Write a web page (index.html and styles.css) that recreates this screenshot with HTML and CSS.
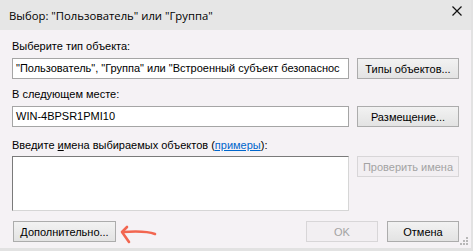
FILE: index.html
```html
<!DOCTYPE html>
<html lang="ru">
<head>
  <meta charset="UTF-8" />
  <title>Выбор: "Пользователь" или "Группа"</title>
  <link rel="stylesheet" href="styles.css">
</head>
<body>
  <div class="window">
    <!-- Заголовок -->
    <div class="titlebar">
      <span class="title">Выбор: "Пользователь" или "Группа"</span>
      <span class="close">
        <svg width="10" height="10" viewBox="0 0 10 10"><path d="M0.5 0.5 L9.5 9.5 M9.5 0.5 L0.5 9.5" stroke="#111" stroke-width="1.2"/></svg>
      </span>
    </div>

    <!-- Содержимое -->
    <div class="content">
      <div class="label label-first">Выберите тип объекта:</div>
      <div class="row">
        <div class="field">"Пользователь", "Группа" или "Встроенный субъект безопаснос</div>
        <button class="btn">Типы объектов...</button>
      </div>

      <div class="label">В следующем месте:</div>
      <div class="row">
        <div class="field">WIN-4BPSR1PMI10</div>
        <button class="btn">Размещение...</button>
      </div>

      <div class="label label-names">Введите <u>и</u>мена выбираемых объектов (<a href="#">примеры</a>):</div>
      <div class="row row-top">
        <div class="textarea"></div>
        <button class="btn" disabled>Проверить имена</button>
      </div>

      <div class="footer">
        <button class="btn btn-more">Дополнительно...</button>
        <div class="spacer"></div>
        <button class="btn btn-small" disabled>OK</button>
        <button class="btn btn-small">Отмена</button>
      </div>
    </div>

    <!-- стрелка-подсказка -->
    <svg class="arrow" width="40" height="24" viewBox="0 0 40 24">
      <path d="M36 9 C 28 6, 18 6, 4 7" stroke="#f26650" stroke-width="2.6" fill="none" stroke-linecap="round"/>
      <path d="M8 2 L3 7 L10 17" stroke="#f26650" stroke-width="2.6" fill="none" stroke-linecap="round" stroke-linejoin="round"/>
    </svg>

    <svg class="grip" width="8" height="8" viewBox="0 0 8 8">
      <rect x="6" y="0" width="2" height="2" fill="#b8b8b8"/>
      <rect x="3" y="3" width="2" height="2" fill="#b8b8b8"/>
      <rect x="6" y="3" width="2" height="2" fill="#b8b8b8"/>
      <rect x="0" y="6" width="2" height="2" fill="#b8b8b8"/>
      <rect x="3" y="6" width="2" height="2" fill="#b8b8b8"/>
      <rect x="6" y="6" width="2" height="2" fill="#b8b8b8"/>
    </svg>
  </div>
</body>
</html>
```

FILE: styles.css
```css
body {
  margin: 0;
  background-color: #e2e2e2;
  font-family: 'Liberation Sans', Arial, sans-serif;
  font-size: 11px;
  color: #000;
}

.window {
  position: relative;
  width: 471px;
  height: 248px;
  background-color: #f5f2f5;
  display: flex;
  flex-direction: column;
}

.titlebar {
  height: 30px;
  background-color: #e6e6e6;
  display: flex;
  align-items: center;
  justify-content: space-between;
  padding: 0 9px 0 9px;
  flex-shrink: 0;
}

.title {
  font-family: 'Open Sans', 'Noto Sans', sans-serif;
  font-size: 11.3px;
  color: #000;
}

.close {
  display: flex;
  margin-top: -8px;
}

.content {
  padding: 0 12px 0 12px;
  display: flex;
  flex-direction: column;
}

.label {
  height: 13px;
  line-height: 13px;
  margin-top: 9px;
  margin-bottom: 5px;
  white-space: nowrap;
}

.label-first {
  margin-top: 10px;
}

.label-names {
  margin-top: 12px;
  margin-bottom: 4px;
}

.label a {
  color: #0066cc;
  text-decoration: underline;
}

.row {
  display: flex;
  gap: 8px;
  align-items: center;
}

.row-top {
  align-items: flex-start;
}

.field {
  width: 337px;
  height: 21px;
  line-height: 19px;
  background: #fff;
  border: 1px solid #a5a5a5;
  padding: 0 3px;
  box-sizing: border-box;
  overflow: hidden;
  white-space: nowrap;
}

.textarea {
  width: 337px;
  height: 55px;
  background: #fff;
  border: 1px solid #d6d6d6;
  border-top-color: #7a7a7a;
  border-left-color: #7a7a7a;
  box-sizing: border-box;
}

.btn {
  width: 102px;
  height: 21px;
  padding: 0;
  font-family: inherit;
  font-size: 11px;
  color: #000;
  background: linear-gradient(#f2f2f2, #e3e3e3);
  border: 1px solid #acacac;
  border-radius: 0;
}

.btn:disabled {
  background: #f2eff2;
  border-color: #d8d6d8;
  color: #a3a3a3;
}

.footer {
  display: flex;
  gap: 9px;
  margin-top: 10px;
}

.btn-more {
  width: 103px;
  margin-left: 1px;
}

.spacer {
  flex: 1;
}

.btn-small {
  width: 72px;
}

.arrow {
  position: absolute;
  left: 119px;
  top: 225px;
}

.grip {
  position: absolute;
  right: 3px;
  bottom: 3px;
}
```
